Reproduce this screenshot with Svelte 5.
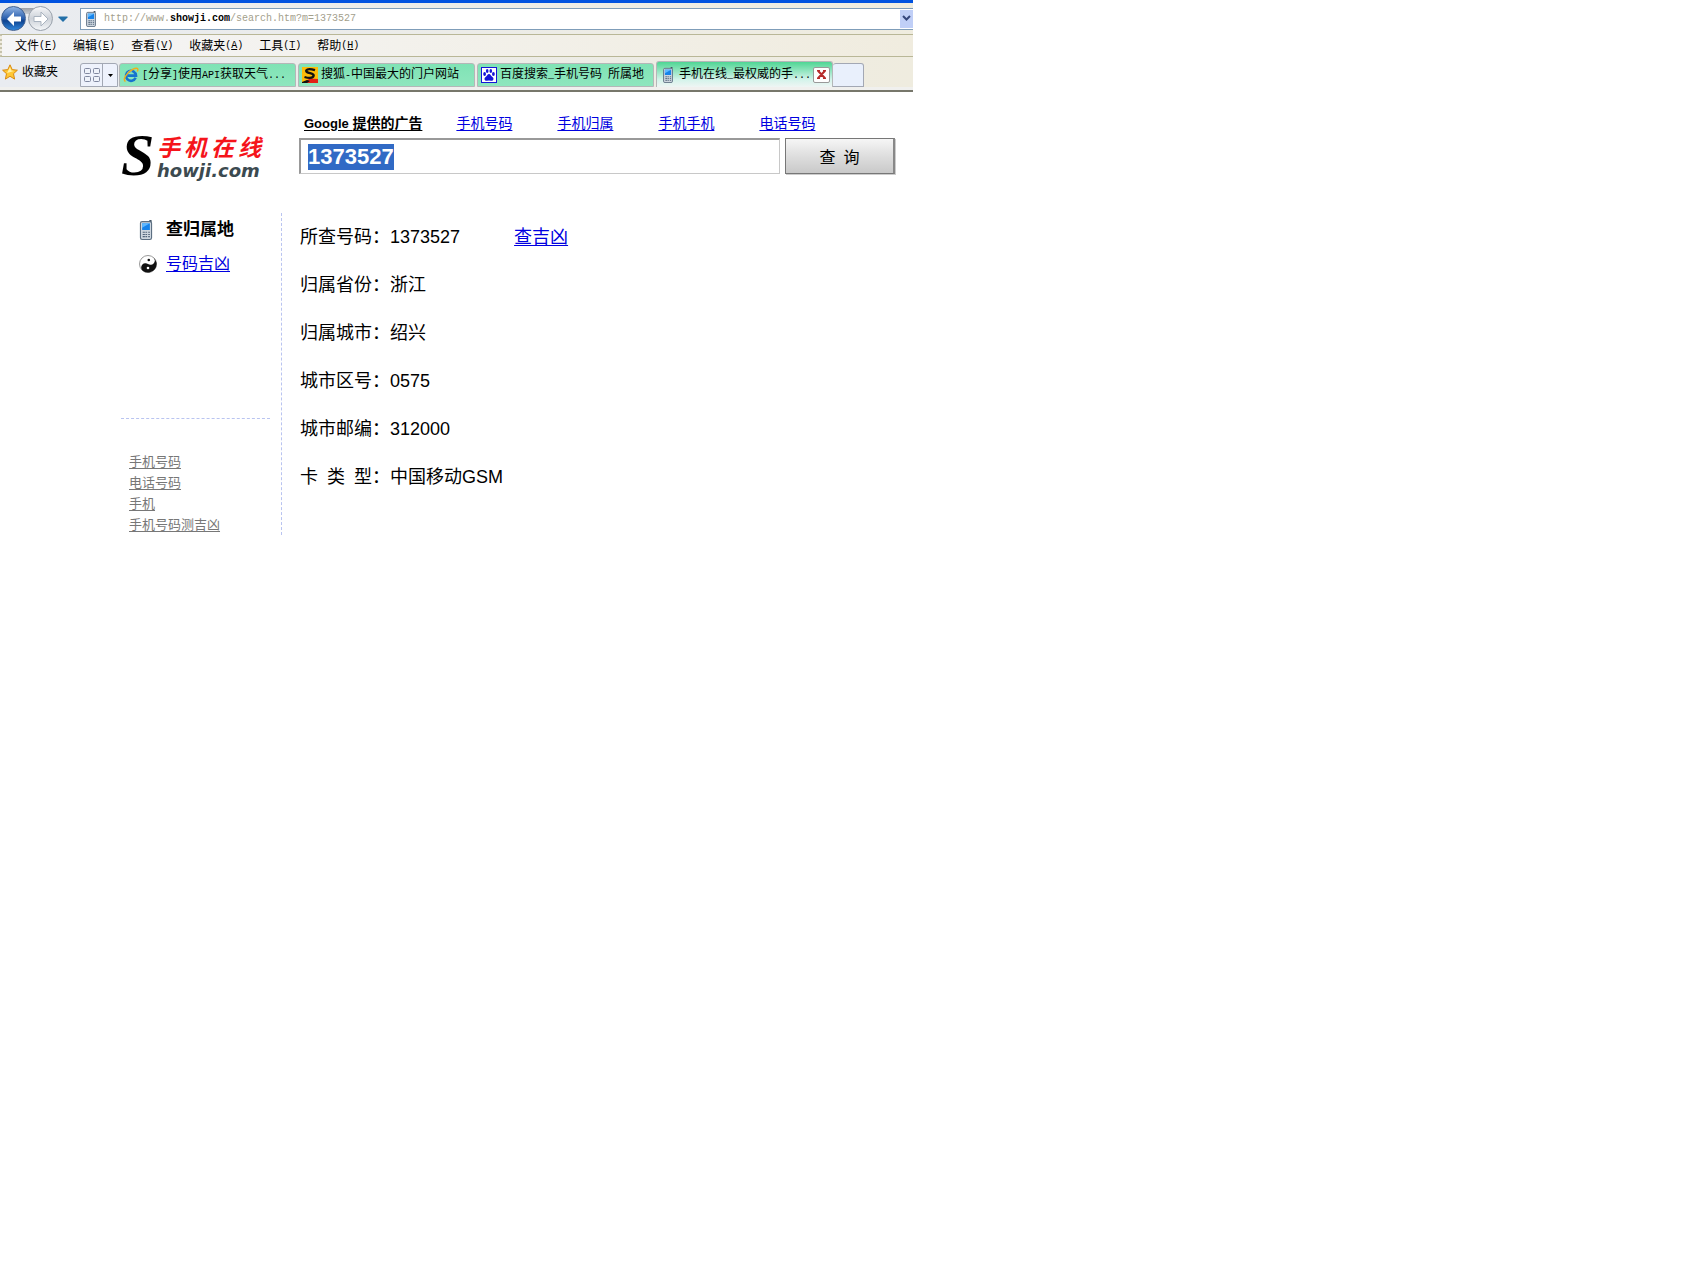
<script>
  import { onMount } from 'svelte';

  let query = $state('1373527');
  let box;

  onMount(() => {
    box.focus();
    box.select();
  });

  const menus = [
    ['文件', 'F'],
    ['编辑', 'E'],
    ['查看', 'V'],
    ['收藏夹', 'A'],
    ['工具', 'T'],
    ['帮助', 'H']
  ];

  const tabs = [
    { icon: 'ie', title: '[分享]使用API获取天气...' },
    { icon: 'sohu', title: '搜狐-中国最大的门户网站' },
    { icon: 'baidu', title: '百度搜索_手机号码 所属地' },
    { icon: 'phone', title: '手机在线_最权威的手...', active: true }
  ];

  const ads = ['手机号码', '手机归属', '手机手机', '电话号码'];
  const related = ['手机号码', '电话号码', '手机', '手机号码测吉凶'];

  const results = [
    ['所查号码：', '1373527', '查吉凶'],
    ['归属省份：', '浙江'],
    ['归属城市：', '绍兴'],
    ['城市区号：', '0575'],
    ['城市邮编：', '312000'],
    ['卡\u2002类\u2002型：', '中国移动GSM']
  ];

  // Splits a title into Latin and Chinese runs so each gets its own font size.
  const runs = (s) => s.match(/[\x20-\x7e]+|[^\x20-\x7e]+/g);
  const latin = (s) => /^[\x20-\x7e]/.test(s);
</script>

{#snippet phone(w, h)}
  <svg width={w} height={h} viewBox="0 0 12 18" aria-hidden="true">
    <rect x="9" y="0" width="2" height="4" fill="#456" />
    <rect x="1" y="1.5" width="10" height="16" rx="1.5" fill="#cdd6df" stroke="#5c6f82" />
    <rect x="2.5" y="3" width="7" height="6" fill="#1683ea" />
    <path d="M2.5 3h7L2.5 7z" fill="#5fb8ff" />
    <path d="M3 11h2M5.5 11h1.500M8 11h1.500M3 13h2M5.500 13h1.500M8 13h1.500M3 15h2M5.500 15h1.500M8 15h1.500" stroke="#51647a" />
  </svg>
{/snippet}

{#snippet favicon(name)}
  {#if name === 'ie'}
    <svg width="16" height="16" viewBox="0 0 16 16" aria-hidden="true">
      <path d="M12.600 10.800A5 5 0 1 1 13 8.600H4.500" fill="none" stroke="#1673cf" stroke-width="2.600" />
      <path d="M4 6.500Q6 3.500 9 4" fill="none" stroke="#7cc8f6" />
      <path d="M2.500 14.500C-1 13 4 5 10 2.200C14 .2 15.800 1.500 14.300 4.500" fill="none" stroke="#efae1c" stroke-width="1.500" />
    </svg>
  {:else if name === 'sohu'}
    <svg width="16" height="16" viewBox="0 0 16 16" aria-hidden="true">
      <rect width="16" height="16" fill="#fdbb08" />
      <path d="M0 16L8 11.500L16 12V16Z" fill="#e32118" />
      <path d="M0 15l5-2l3 1l-3 2H0z" fill="#111" />
      <path d="M13 3.200Q6 .8 4.300 3.300Q3.600 5.300 8 6.200Q12.800 7.400 11.300 9.600Q9 12 2.500 10" fill="none" stroke="#111" stroke-width="2.300" />
    </svg>
  {:else if name === 'baidu'}
    <svg width="16" height="16" viewBox="0 0 16 16" aria-hidden="true">
      <rect x=".5" y=".5" width="15" height="15" fill="#fff" stroke="#1515d8" />
      <g fill="#1515d8">
        <ellipse cx="3.600" cy="7" rx="1.400" ry="1.900" />
        <ellipse cx="6.200" cy="4" rx="1.300" ry="1.900" />
        <ellipse cx="9.800" cy="4" rx="1.300" ry="1.900" />
        <ellipse cx="12.400" cy="7" rx="1.400" ry="1.900" />
        <path d="M8 7C6.500 7 6 9 4.300 10.300C2.500 12 4 14.300 6 13.800Q8 13.300 10 13.800C12 14.300 13.500 12 11.700 10.300C10 9 9.500 7 8 7Z" />
      </g>
    </svg>
  {:else}
    {@render phone(12, 16)}
  {/if}
{/snippet}

<div class="page">
  <header class="chrome">
    <div class="address-row">
      <div class="nav">
        <button class="round back" aria-label="后退">
          <svg width="16" height="16" viewBox="0 0 16 16"><path d="M8 1L1 8l7 7v-4.500h7v-5H8z" fill="#fff" /></svg>
        </button>
        <button class="round" aria-label="前进">
          <svg width="16" height="16" viewBox="0 0 16 16"><path d="M8 1l7 7l-7 7v-4.500H1v-5h7z" fill="#fff" stroke="#a9b3bf" /></svg>
        </button>
        <button class="recent" aria-label="最近的网页">
          <svg width="10" height="6" viewBox="0 0 10 6"><path d="M.5.500h9v1L5 6L.5 1.500z" fill="#226fa8" /></svg>
        </button>
      </div>
      <div class="address">
        {@render phone(12, 16)}
        <a class="url" href="#url">http://www.<b>showji.com</b>/search.htm?m=1373527</a>
        <button class="drop" aria-label="显示地址">
          <svg width="9" height="7" viewBox="0 0 9 7"><path d="M1 1l3.500 3.500L8 1" fill="none" stroke="#35477c" stroke-width="2" /></svg>
        </button>
      </div>
    </div>

    <nav class="menus">
      {#each menus as [name, key]}
        <button>{name}<span class="latin">(<u>{key}</u>)</span></button>
      {/each}
    </nav>

    <div class="tab-row">
      <button class="favorites">
        <svg width="16" height="16" viewBox="0 0 16 16" aria-hidden="true">
          <path d="M8 .8l2.200 4.800l5.200.6l-3.900 3.500l1.100 5.400L8 12.300l-4.600 2.800l1.100-5.400L.6 6.200l5.200-.6z" fill="#ffc734" stroke="#d98a12" stroke-linejoin="round" />
          <path d="M8 3l1.300 3.500L12 7L5 9z" fill="#fff1a8" />
        </svg>
        <span>收藏夹</span>
      </button>
      <div class="quick">
        <button aria-label="快速导航选项卡">
          <svg width="16" height="14" viewBox="0 0 16 14"><g fill="#eef2fa" stroke="#8088a0"><rect x=".5" y=".5" width="6" height="5" rx="1" /><rect x="9.500" y=".5" width="6" height="5" rx="1" /><rect x=".5" y="8.500" width="6" height="5" rx="1" /><rect x="9.500" y="8.500" width="6" height="5" rx="1" /></g></svg>
        </button>
        <button class="list" aria-label="选项卡列表">
          <svg width="5" height="3" viewBox="0 0 5 3"><path d="M0 0h5L2.500 3z" fill="#000" /></svg>
        </button>
      </div>
      <div class="tabs">
        {#each tabs as tab}
          <div class="tab" class:active={tab.active}>
            <button class="pick">
              <span class="icon">{@render favicon(tab.icon)}</span>
              <span class="title">{#each runs(tab.title) as run}<span class:latin={latin(run)}>{run}</span>{/each}</span>
            </button>
            {#if tab.active}
              <button class="close" aria-label="关闭选项卡">
                <svg width="9" height="9" viewBox="0 0 9 9"><path d="M1.200 0v1L7.800 8v1M7.800 0v1L1.200 8v1" fill="none" stroke="#b72b2b" stroke-width="2" /><path d="M0 .5h3M6 .5h3M0 8.500h3M6 8.500h3" stroke="#b72b2b" /></svg>
              </button>
            {/if}
          </div>
        {/each}
      </div>
      <button class="new-tab" aria-label="新选项卡"></button>
    </div>
  </header>

  <main>
    <div class="top">
      <a class="logo" href="#home">
        <span class="initial">S</span>
        <span class="words">
          <span class="cn"><i>手</i><i>机</i><i>在</i><i>线</i></span>
          <span class="en">howji.com</span>
        </span>
      </a>
      <div class="search">
        <div class="ads">
          <a class="by" href="#ads">Google <span>提供的广告</span></a>
          {#each ads as ad}
            <a href="#ad">{ad}</a>
          {/each}
        </div>
        <form onsubmit={(e) => e.preventDefault()}>
          <input type="text" aria-label="手机号码" bind:this={box} bind:value={query} />
          <button>查&ensp;询</button>
        </form>
      </div>
    </div>

    <div class="body">
      <aside>
        <ul class="kinds">
          <li>{@render phone(14, 20)}<strong>查归属地</strong></li>
          <li>
            <svg width="18" height="18" viewBox="0 0 18 18" aria-hidden="true">
              <circle cx="9" cy="9" r="8.500" fill="#fff" stroke="#999" />
              <path d="M14 2A8.500 8.500 0 0 1 4 16A4.300 4.300 0 0 1 9 9A4.300 4.300 0 0 0 14 2Z" fill="#111" />
              <circle cx="9.800" cy="5" r="1.300" fill="#111" />
              <circle cx="9" cy="13" r="1.300" fill="#fff" />
            </svg>
            <a href="#luck">号码吉凶</a>
          </li>
        </ul>
        <ul class="related">
          {#each related as item}
            <li><a href="#related">{item}</a></li>
          {/each}
        </ul>
      </aside>
      <dl>
        {#each results as [label, value, link]}
          <div>
            <dt>{label}</dt>
            <dd>{value}{#if link}<a href="#luck">{link}</a>{/if}</dd>
          </div>
        {/each}
      </dl>
    </div>
  </main>
</div>

<style>
  :global(body) {
    margin: 0;
    background: #fff;
  }

  .page {
    max-width: 913px;
    font-family: 'Liberation Sans', 'Noto Sans CJK SC', sans-serif;
    color: #000;
  }

  svg {
    display: block;
    flex: none;
  }

  ul, dl, dd {
    margin: 0;
    padding: 0;
    list-style: none;
  }

  .chrome {
    border-top: 3px solid #0052e0;
    border-bottom: 2px solid #77776b;
    background: linear-gradient(90deg, #e9ecf1, #efecdf);
    font-size: 12px;
    line-height: 16px;
  }

  .chrome button {
    display: flex;
    align-items: center;
    justify-content: center;
    box-sizing: border-box;
    margin: 0;
    padding: 0;
    border: 0;
    background: none;
    color: #000;
    font: inherit;
    white-space: nowrap;
  }

  .latin,
  .url {
    font-family: 'Liberation Mono', monospace;
    font-size: 10px;
  }

  .address-row {
    display: flex;
    align-items: center;
    height: 31px;
  }

  .nav {
    display: flex;
    align-items: center;
    flex: none;
    gap: 2px;
    width: 79px;
    padding-left: 1px;
    box-sizing: border-box;
    background: linear-gradient(#9b9fa6, #c8ccd2) 12px 2px / 30px 6px no-repeat;
  }

  .chrome .round {
    width: 25px;
    height: 25px;
    border: 1px solid #98a0aa;
    border-radius: 50%;
    background: linear-gradient(#f6f7f9, #ccd1d8 50%, #f4f6f8);
  }

  .chrome .back {
    border-color: #3f5f90;
    background: linear-gradient(#8fb2e2, #2a5fae 50%, #0f438f 60%, #2f86dc);
  }

  .chrome .recent {
    width: 16px;
    height: 20px;
  }

  .address {
    display: flex;
    align-items: center;
    flex: 1;
    height: 22px;
    box-sizing: border-box;
    margin-left: 1px;
    padding-left: 4px;
    border: 1px solid #7f9db9;
    border-right: 0;
    background: #fff;
  }

  .url {
    flex: 1;
    padding-left: 7px;
    color: #a3a08c;
    text-decoration: none;
  }

  .url b {
    color: #000;
  }

  .chrome .drop {
    width: 13px;
    height: 18px;
    background: #c0cff7;
  }

  .menus {
    display: flex;
    align-items: center;
    gap: 16px;
    height: 21px;
    padding-left: 13px;
    border: solid #b9b797;
    border-width: 1px 0;
    border-left: 2px dotted #c6c3ad;
    background: linear-gradient(90deg, #f5f5f6, #f0ecdf);
  }

  .tab-row {
    display: flex;
    align-items: flex-end;
    height: 30px;
    padding-bottom: 3px;
    background: linear-gradient(#f0f0ee, #f0f0ee) bottom / 100% 3px no-repeat;
  }

  .chrome .favorites {
    justify-content: flex-start;
    align-self: center;
    gap: 4px;
    width: 80px;
    padding-left: 2px;
  }

  .quick {
    display: flex;
    flex: none;
    width: 38px;
    height: 24px;
    box-sizing: border-box;
    margin-right: 1px;
    border: 1px solid #a3a8b4;
    border-radius: 3px 3px 0 0;
    background: #eef2fc;
  }

  .quick button {
    flex: 1;
  }

  .quick .list {
    flex: none;
    width: 15px;
    border-left: 1px solid #a3a8b4;
  }

  .tabs {
    display: flex;
    align-items: flex-end;
    gap: 2px;
  }

  .tab {
    display: flex;
    align-items: center;
    width: 177px;
    height: 24px;
    box-sizing: border-box;
    padding: 0 3px;
    border: 1px solid #b4b7b8;
    border-radius: 3px 3px 0 0;
    background: linear-gradient(#7fe3b5, #8fe6be);
  }

  .tab.active {
    height: 26px;
    padding-right: 2px;
    border-bottom: 0;
    background: linear-gradient(#4fd694, #d3f3ea 70%, #eff5f4);
  }

  .tab .pick {
    flex: 1;
    justify-content: flex-start;
    gap: 3px;
    min-width: 0;
  }

  .icon {
    display: flex;
    justify-content: center;
    width: 16px;
  }

  .title {
    white-space: pre;
  }

  .chrome .close {
    width: 17px;
    height: 16px;
    border: 1px solid #999;
    border-radius: 2px;
    background: #fff;
  }

  .chrome .new-tab {
    width: 31px;
    height: 24px;
    border: 1px solid #a3a8b4;
    border-left: 0;
    border-radius: 3px 3px 0 0;
    background: #e9f0fc;
  }

  main {
    padding: 22px 18px 0 121px;
  }

  main a {
    color: #0000e0;
    text-underline-offset: 2px;
  }

  .top {
    display: flex;
  }

  main .logo {
    display: flex;
    flex: none;
    width: 178px;
    padding-top: 16px;
    box-sizing: border-box;
    text-decoration: none;
  }

  .initial {
    width: 36px;
    color: #000;
    font: italic bold 60px/50px 'Liberation Serif', serif;
  }

  .words {
    display: flex;
    flex-direction: column;
  }

  .cn {
    display: flex;
    gap: 4px;
    color: #f5141b;
    font: bold 23px/32px 'Noto Sans CJK SC', sans-serif;
  }

  .en {
    color: #3c4a50;
    font: italic bold 18px/18px 'DejaVu Sans', sans-serif;
  }

  .search {
    flex: 1;
  }

  .ads {
    display: flex;
    align-items: center;
    gap: 45px;
    height: 18px;
    padding-left: 5px;
    font-size: 14px;
    line-height: 18px;
    white-space: nowrap;
  }

  .ads .by {
    margin-right: -11px;
    color: #000;
    font-size: 13px;
    font-weight: bold;
  }

  .ads .by span {
    font-size: 14px;
  }

  form {
    display: flex;
    gap: 5px;
    margin-top: 6px;
  }

  form input {
    flex: 1;
    min-width: 0;
    height: 36px;
    box-sizing: border-box;
    margin: 0;
    padding: 0 7px;
    border: solid #c8c8c8;
    border-width: 2px 1px 1px 2px;
    border-top-color: #999;
    border-left-color: #999;
    outline: 0;
    background: #fff;
    color: #000;
    font: bold 22px/26px 'Liberation Sans', sans-serif;
  }

  form input::selection {
    background: #316ac5;
    color: #fff;
  }

  form button {
    width: 110px;
    height: 36px;
    padding: 0;
    border: 1px solid #777;
    border-right: 2px solid #888;
    background: linear-gradient(#f6f6f6, #dedede 50%, #c9c9c9);
    box-shadow: 1px 1px 0 #ccc;
    color: #000;
    font: 16px/20px 'Noto Sans CJK SC', sans-serif;
  }

  .body {
    display: flex;
    margin-top: 33px;
  }

  aside {
    width: 160px;
    border-right: 1px dashed #b9c4f0;
  }

  .kinds {
    height: 205px;
    margin-right: 11px;
    padding-left: 18px;
    border-bottom: 1px dashed #b9c4f0;
    font-size: 16px;
    line-height: 34px;
  }

  .kinds li {
    display: grid;
    grid-template-columns: 18px 1fr;
    gap: 9px;
    align-items: center;
    justify-items: start;
  }

  .kinds strong {
    font-size: 17px;
  }

  .related {
    padding: 32px 0 0 8px;
    font-size: 13px;
    line-height: 21px;
  }

  .related a {
    color: #777;
  }

  dl {
    padding-left: 18px;
    font-size: 18px;
    line-height: 48px;
  }

  dl div {
    display: flex;
  }

  dd a {
    margin-left: 54px;
  }
</style>
